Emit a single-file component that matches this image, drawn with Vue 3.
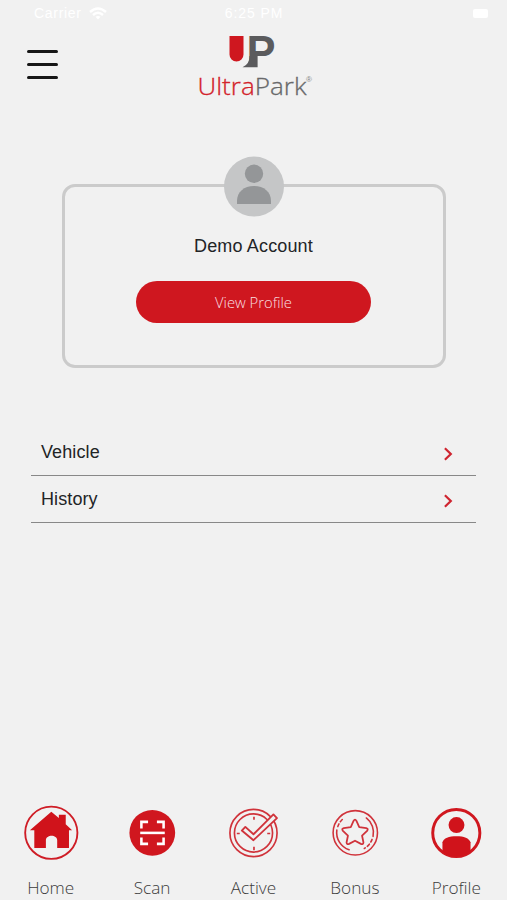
<script setup>
import { ref } from "vue";

const cuenta = ref({ nombre: "Demo Account" });

const opciones = ref([
  { id: 1, titulo: "Vehicle" },
  { id: 2, titulo: "History" }
]);

const pestanas = ref([
  { id: "home", titulo: "Home" },
  { id: "scan", titulo: "Scan" },
  { id: "active", titulo: "Active" },
  { id: "bonus", titulo: "Bonus" },
  { id: "profile", titulo: "Profile" }
]);

const activa = ref("profile");
</script>

<template>
  <div class="pantalla">
    <div class="estado">
      <div class="operador">
        <span>Carrier</span>
        <svg width="18" height="13" viewBox="0 0 18 13" fill="none" stroke="#fff" stroke-width="2.4">
          <path d="M1 5 Q9 -2 17 5" />
          <path d="M4 8 Q9 3.5 14 8" />
          <path d="M9 12.5 L6.5 9.8 Q9 8 11.5 9.8 Z" fill="#fff" stroke="none" />
        </svg>
      </div>
      <span class="hora">6:25 PM</span>
      <span class="bateria"><i></i></span>
    </div>

    <header class="encabezado">
      <button class="menu" aria-label="Menu">
        <span></span>
        <span></span>
        <span></span>
      </button>
      <svg class="logo" width="124" height="80" viewBox="0 -8 124 80">
        <path d="M32.5 2 H46.5 V20.5 A7 7 0 0 1 32.5 20.5 Z" fill="#cf171f" />
        <path d="M45.5 33.2 Q52.5 30.5 52.5 22 H60.6 V33.2 Z" fill="#5b5b5d" />
        <text class="marca" x="49.5" y="33" textLength="29" lengthAdjust="spacingAndGlyphs">P</text>
        <text class="nombre-logo" x="0.5" y="61" textLength="109" lengthAdjust="spacingAndGlyphs"><tspan fill="#d3222b" stroke="#d3222b">Ultra</tspan><tspan fill="#68686a" stroke="#68686a">Park</tspan></text>
        <text class="registro" x="109" y="48">®</text>
      </svg>
    </header>

    <section class="tarjeta">
      <svg class="avatar" width="60" height="60" viewBox="0 0 60 60">
        <circle cx="30" cy="29.6" r="30" fill="#c5c6c7" />
        <circle cx="30" cy="16.7" r="9.2" fill="#949698" />
        <path d="M13 47 V44 C13 35 20 29 30 29 S47 35 47 44 V47 Z" fill="#949698" />
      </svg>
      <div class="nombre">{{ cuenta.nombre }}</div>
      <button class="boton">View Profile</button>
    </section>

    <ul class="lista">
      <li v-for="opcion in opciones" :key="opcion.id">
        <span>{{ opcion.titulo }}</span>
        <svg width="10" height="14" viewBox="0 0 10 14" fill="none" stroke="#cf2530" stroke-width="2.2">
          <path d="M1.9 1.3 L7.8 7 L1.9 12.7" />
        </svg>
      </li>
    </ul>

    <nav class="barra">
      <button v-for="p in pestanas" :key="p.id" class="pestana" @click="activa = p.id">
        <svg v-if="p.id === 'home'" width="56" height="56" viewBox="0 0 56 56">
          <circle cx="28.3" cy="28.3" r="26.6" fill="none" stroke="#cf1d26" stroke-width="1.9" />
          <path d="M6.5 25.8 L28.3 6.8 L36 13.3 V10 H43 V19.5 L49.5 25.8 H46.3 V43.8 H34.3 V36 C34.3 29.7 22.8 29.7 22.8 36 V43.8 H11 V25.8 Z" fill="#d0131b" />
        </svg>

        <svg v-else-if="p.id === 'scan'" width="56" height="56" viewBox="0 0 56 56" fill="none" stroke="#fff" stroke-width="2.6">
          <circle cx="28.3" cy="28.3" r="23.3" fill="#d0171f" stroke="none" />
          <path d="M17.2 23.8 V17.2 H24 M33 17.2 H39.8 V23.8 M39.8 33.2 V39.6 H33 M24 39.6 H17.2 V33.2" />
          <path d="M16 28.4 H41" />
        </svg>

        <svg v-else-if="p.id === 'active'" width="56" height="56" viewBox="0 0 56 56" fill="none" stroke="#d0333b" stroke-width="1.7">
          <circle cx="28.5" cy="28.5" r="24" />
          <circle cx="28.5" cy="28.5" r="19.4" />
          <path d="M29 12 V15 M29 42.5 V46 M11.5 29 H14.5 M42.5 29 H45.5" />
          <path d="M16.6 26 L20.2 22.3 L28.5 29.8 L48.8 9.6 L52.4 13.3 L28.5 35.8 Z" fill="#f1f1f1" stroke-width="1.9" stroke-linejoin="round" />
        </svg>

        <svg v-else-if="p.id === 'bonus'" width="56" height="56" viewBox="0 0 56 56" fill="none" stroke="#d0333b" stroke-width="1.6" stroke-linecap="round">
          <circle cx="28.3" cy="28.3" r="22.6" />
          <path d="M22 45.6 A18.6 18.6 0 0 1 9.5 25.5" />
          <path d="M10.5 22 A18.6 18.6 0 0 1 16.8 13.2" stroke-dasharray="3 2.6" />
          <path d="M39.5 13.2 A18.6 18.6 0 0 1 46.4 32" />
          <path d="M45.4 35 A18.6 18.6 0 0 1 37.5 44.3" stroke-dasharray="3 2.6" />
          <path d="M26.5 16.2 Q28 13.8 29.5 16.2 L32.3 22.5 L39.5 23.5 Q42 24.2 40.3 26.3 L35.2 31.3 L36.6 38.2 Q36.4 40.6 34 39.6 L28 36.4 L22 39.6 Q19.6 40.6 19.4 38.2 L20.8 31.3 L15.7 26.3 Q14 24.2 16.5 23.5 L23.7 22.5 Z" stroke-width="1.8" stroke-linejoin="round" />
        </svg>

        <svg v-else width="56" height="56" viewBox="0 0 56 56">
          <circle cx="28.3" cy="28.5" r="24" fill="none" stroke="#d0171f" stroke-width="3" />
          <circle cx="28.5" cy="20.4" r="8.1" fill="#d0131b" />
          <path d="M14.2 47 V38 C15 33.8 21 31.8 28.5 31.8 S41.5 33.8 42.8 38 V47 C36 54 20 54 14.2 47 Z" fill="#d0131b" />
        </svg>
        <span>{{ p.titulo }}</span>
      </button>
    </nav>
  </div>
</template>

<style>
body {
  margin: 0;
  background: #f1f1f1;
}
</style>

<style scoped>
.pantalla {
  height: 900px;
  display: flex;
  flex-direction: column;
  background: #f1f1f1;
  font-family: "Liberation Sans", Arial, sans-serif;
  color: #222426;
  overflow: hidden;
}

button {
  border: none;
  background: none;
  padding: 0;
  font-family: inherit;
  color: inherit;
}

.estado {
  display: grid;
  grid-template-columns: 1fr 1fr 1fr;
  align-items: center;
  height: 26px;
  padding: 0 19px 0 34px;
  box-sizing: border-box;
  color: #fff;
  font-size: 14px;
}

.operador {
  display: flex;
  align-items: center;
  gap: 7px;
  letter-spacing: 0.7px;
}

.hora {
  justify-self: center;
  padding-right: 14px;
  letter-spacing: 0.9px;
  white-space: nowrap;
}

.bateria {
  justify-self: end;
}

.bateria i {
  display: block;
  width: 15px;
  height: 9px;
  border-radius: 2px;
  background: #fff;
}

.encabezado {
  display: grid;
  grid-template-columns: 1fr 124px 1fr;
  align-items: start;
  height: 130px;
}

.menu {
  display: flex;
  flex-direction: column;
  gap: 10px;
  margin: 24px 0 0 27px;
  width: 31px;
}

.menu span {
  height: 3px;
  border-radius: 2px;
  background: #161616;
}

.logo {
  margin-left: 5px;
}

.marca {
  font-family: "Liberation Sans", Arial, sans-serif;
  font-weight: 700;
  font-size: 45px;
  fill: #5b5b5d;
}

.nombre-logo {
  font-family: "Open Sans", sans-serif;
  font-weight: 300;
  font-size: 24.5px;
  stroke-width: 0.3px;
}

.registro {
  font-size: 8px;
  fill: #858585;
}

.tarjeta {
  display: flex;
  flex-direction: column;
  align-items: center;
  width: 384px;
  height: 184px;
  margin: 28px auto 0;
  box-sizing: border-box;
  border: 3px solid #cbcbcb;
  border-radius: 13px;
}

.avatar {
  flex: none;
  margin-top: -30px;
  overflow: visible;
}

.nombre {
  margin-top: 19px;
  font-size: 18px;
  line-height: 21px;
  letter-spacing: 0.15px;
}

.boton {
  width: 235px;
  height: 42px;
  margin-top: 24px;
  border-radius: 21px;
  background: #cf171f;
  color: #f9dfe0;
  font-family: "Open Sans", sans-serif;
  font-weight: 300;
  font-size: 14.8px;
}

.lista {
  list-style: none;
  margin: 60px 31px 0;
  padding: 0;
}

.lista li {
  display: flex;
  align-items: center;
  justify-content: space-between;
  height: 47.5px;
  padding: 2px 23px 0 10px;
  box-sizing: border-box;
  border-bottom: 1.5px solid #888;
  font-size: 18px;
  letter-spacing: 0.1px;
}

.lista svg {
  margin-top: 3px;
}

.barra {
  display: grid;
  grid-template-columns: repeat(5, 1fr);
  margin-top: auto;
}

.pestana {
  display: flex;
  flex-direction: column;
  align-items: center;
  height: 95px;
}

.pestana span {
  margin-top: 16px;
  font-family: "Open Sans", sans-serif;
  font-weight: 300;
  font-size: 17.2px;
  line-height: 24px;
  color: #3c3c3c;
}
</style>
